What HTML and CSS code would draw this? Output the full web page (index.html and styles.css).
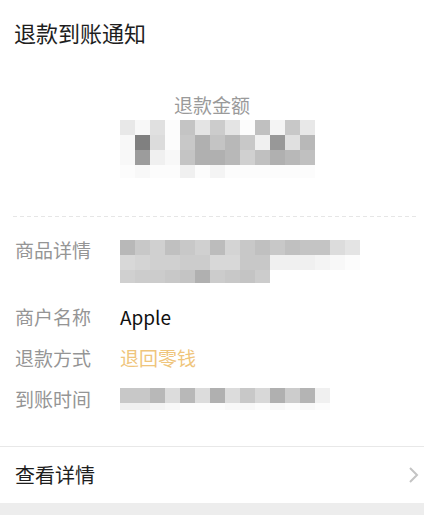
FILE: index.html
```html
<!DOCTYPE html>
<html lang="zh">
<head>
<meta charset="utf-8">
<title>退款到账通知</title>
<link rel="stylesheet" href="styles.css">
</head>
<body>
<div class="card">
  <div class="title">退款到账通知</div>
  <div class="amount-label">退款金额</div>
  <div class="mosaic amount">
    <i class="e8"></i><i class="f8"></i><i class="e0"></i><i class="fc"></i><i class="c4"></i><i class="e4"></i><i class="cc"></i><i class="e4"></i><i class="fc"></i><i class="c0"></i><i class="f4"></i><i class="c8"></i><i class="e8"></i>
    <i class="f8"></i><i class="s80"></i><i class="dc"></i><i class="fc"></i><i class="c8"></i><i class="b0"></i><i class="c4"></i><i class="b8"></i><i class="c8"></i><i class="f0"></i><i class="s98"></i><i class="e0"></i><i class="b8"></i>
    <i class="f8"></i><i class="s9c"></i><i class="f0"></i><i class="f8"></i><i class="c4"></i><i class="b0"></i><i class="b0"></i><i class="b8"></i><i class="d0"></i><i class="c0"></i><i class="b0"></i><i class="b8"></i><i class="c0"></i>
    <i class="fc"></i><i class="f8"></i><i class="fc"></i><i class="fc"></i><i class="f0"></i><i class="fc"></i><i class="f4"></i><i class="fc"></i><i class="fc"></i><i class="fc"></i><i class="fc"></i><i class="fc"></i><i class="fc"></i>
  </div>
  <div class="divider"></div>
  <div class="info">
    <div class="row row-tall">
      <span class="label">商品详情</span>
      <div class="value-block">
        <div class="mosaic product">
          <i class="b8"></i><i class="c8"></i><i class="d0"></i><i class="c0"></i><i class="c8"></i><i class="d0"></i><i class="bc"></i><i class="d4"></i><i class="c8"></i><i class="c0"></i><i class="c8"></i><i class="c0"></i><i class="c4"></i><i class="c4"></i><i class="dc"></i><i class="e4"></i>
          <i class="d8"></i><i class="d4"></i><i class="d0"></i><i class="d0"></i><i class="cc"></i><i class="cc"></i><i class="d8"></i><i class="d8"></i><i class="c8"></i><i class="c8"></i><i class="f0"></i><i class="f0"></i><i class="f0"></i><i class="f4"></i><i class="f8"></i><i class="fc"></i>
          <i class="d0"></i><i class="cc"></i><i class="cc"></i><i class="c8"></i><i class="c4"></i><i class="b0"></i><i class="cc"></i><i class="c8"></i><i class="c4"></i><i class="cc"></i>
        </div>
      </div>
    </div>
    <div class="row">
      <span class="label">商户名称</span>
      <span class="value">Apple</span>
    </div>
    <div class="row">
      <span class="label">退款方式</span>
      <span class="value gold">退回零钱</span>
    </div>
    <div class="row">
      <span class="label">到账时间</span>
      <div class="value-block time-block">
        <div class="mosaic time">
          <i class="c8"></i><i class="c8"></i><i class="b8"></i><i class="dc"></i><i class="b8"></i><i class="dc"></i><i class="b0"></i><i class="dc"></i><i class="c8"></i><i class="d8"></i><i class="b0"></i><i class="cc"></i><i class="b4"></i><i class="f0"></i>
          <i class="f0"></i><i class="f0"></i><i class="f4"></i><i class="f8"></i><i class="fc"></i><i class="fc"></i><i class="fc"></i><i class="f8"></i><i class="f8"></i><i class="fc"></i><i class="f8"></i><i class="fc"></i><i class="f8"></i><i class="fc"></i>
        </div>
      </div>
    </div>
  </div>
  <div class="detail-link">
    <span class="detail-text">查看详情</span>
    <svg class="chevron" width="12" height="18" viewBox="0 0 12 18"><path d="M3 2 L10 9 L3 16" fill="none" stroke="#c4c4c4" stroke-width="2"/></svg>
  </div>
</div>
</body>
</html>
```

FILE: styles.css
```css
html, body {
  margin: 0;
  padding: 0;
}
body {
  width: 424px;
  height: 515px;
  background: #ededed;
  font-family: "Noto Sans CJK SC", "Noto Sans", sans-serif;
  overflow: hidden;
}
.card {
  background: #ffffff;
  height: 503px;
  display: flex;
  flex-direction: column;
}
.title {
  height: 64px;
  line-height: 64px;
  padding-left: 14px;
  font-size: 22px;
  color: #1e1e1e;
}
.amount-label {
  margin-top: 29px;
  height: 24px;
  line-height: 24px;
  text-align: center;
  font-size: 19px;
  color: #9a9a9a;
}
.mosaic {
  display: grid;
  grid-auto-rows: 15px;
}
.mosaic i {
  display: block;
}
.amount {
  margin: 3px 0 0 120px;
  grid-template-columns: repeat(13, 15px);
  grid-template-rows: 15px 15px 15px 13px;
  width: 195px;
}
.divider {
  margin: 38px 6px 0 13px;
  height: 1px;
  background: repeating-linear-gradient(to right, #e6e6e6 0 4px, transparent 4px 7px);
}
.info {
  padding: 12px 0 27px 15px;
}
.row {
  display: flex;
  align-items: flex-start;
  height: 41px;
}
.row-tall {
  height: 67px;
}
.label {
  width: 105px;
  flex: none;
  line-height: 41px;
  font-size: 19px;
  color: #959595;
}
.value {
  line-height: 41px;
  font-size: 19px;
  color: #111;
}
.gold {
  color: #efc57c;
}
.value-block {
  padding-top: 11px;
}
.product {
  grid-template-columns: repeat(16, 15px);
  grid-template-rows: 15px 15px 13px;
}
.time-block {
  padding-top: 10px;
}
.time {
  grid-template-columns: repeat(14, 15px);
  grid-template-rows: 15px 7px;
}
.detail-link {
  border-top: 1px solid #e8e8e8;
  height: 55px;
  display: flex;
  align-items: center;
  justify-content: space-between;
  padding: 0 5px 0 15px;
}
.detail-text {
  font-size: 20px;
  color: #1e1e1e;
}
.chevron {
  display: block;
}
.s80 { background: #808080; }
.s98 { background: #989898; }
.s9c { background: #9c9c9c; }
.b0 { background: #b0b0b0; }
.b4 { background: #b4b4b4; }
.b8 { background: #b8b8b8; }
.bc { background: #bcbcbc; }
.c0 { background: #c0c0c0; }
.c4 { background: #c4c4c4; }
.c8 { background: #c8c8c8; }
.cc { background: #cccccc; }
.d0 { background: #d0d0d0; }
.d4 { background: #d4d4d4; }
.d8 { background: #d8d8d8; }
.dc { background: #dcdcdc; }
.e0 { background: #e0e0e0; }
.e4 { background: #e4e4e4; }
.e8 { background: #e8e8e8; }
.f0 { background: #f0f0f0; }
.f4 { background: #f4f4f4; }
.f8 { background: #f8f8f8; }
.fc { background: #fcfcfc; }
```
